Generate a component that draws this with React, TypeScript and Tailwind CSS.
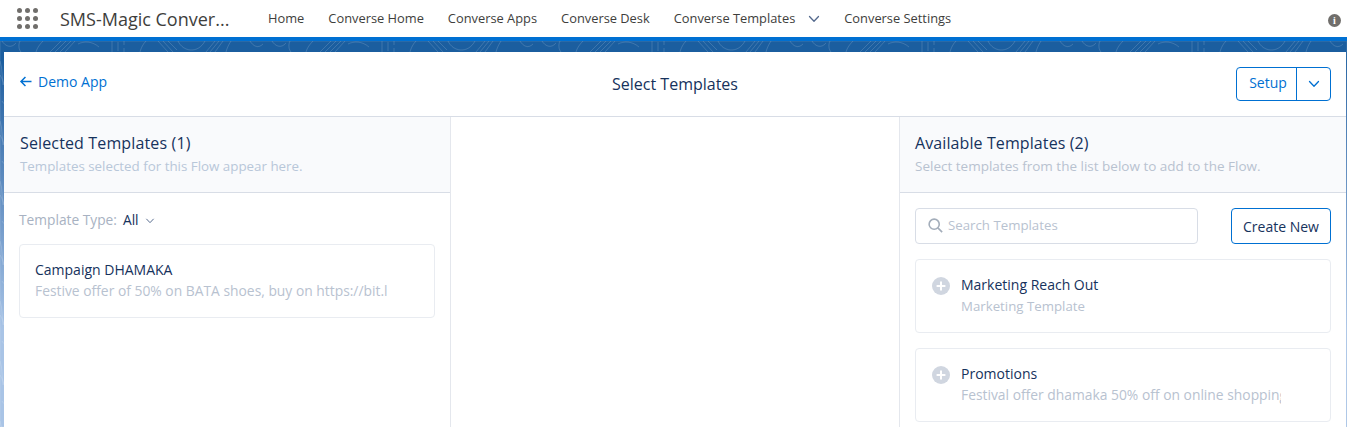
import React from "react";

const Topo = () => (
  <svg className="absolute inset-0 h-full w-full" fill="none" stroke="#ffffff" strokeOpacity="0.15" strokeWidth="1">
    <defs>
      <pattern id="topo" x="0" y="0" width="270" height="60" patternUnits="userSpaceOnUse">
        <path d="M2 0c3 5 9 8 14 2M20 0c-2 4-1 9 1 11M36 11c1-4 4-8 7-11M50 11l11-11M55 11l11-11M60 11l11-11M65 11l10-11M78 3c6-3 14-3 21 3M112 0v11M118 1v9M124 0v4M124 7v4M140 11c1-4 3-8 6-11M158 0l10 11M163 0l10 11M168 0l9 9M178 0c5 11 20 13 27 0M206 11l9-11M210 11l9-11M215 11l8-11M226 11c1-4 3-8 5-11M250 0c3 5 8 8 13 3" />
        <path d="M0 20c3 8 1 16 4 24M0 34c2 3 3 6 3 10" />
      </pattern>
    </defs>
    <rect width="100%" height="100%" fill="url(#topo)" />
  </svg>
);

const Chevron = ({ className = "" }: { className?: string }) => (
  <svg viewBox="0 0 12 8" className={className} fill="none" stroke="currentColor" strokeWidth="1.3" strokeLinecap="round" strokeLinejoin="round">
    <path d="M1.5 1.5 6 6.2l4.5-4.7" />
  </svg>
);

const Plus = () => (
  <svg viewBox="0 0 18 18" className="h-[18px] w-[18px] shrink-0">
    <circle cx="9" cy="9" r="9" fill="#d0d6e0" />
    <path d="M9 4.6v8.8M4.6 9h8.8" stroke="#fff" strokeWidth="2" />
  </svg>
);

const navItems = ["Home", "Converse Home", "Converse Apps", "Converse Desk"];

const AvailableCard = ({ title, sub, subClass }: { title: string; sub: string; subClass: string }) => (
  <div className="flex h-[74px] gap-[11px] rounded border border-[#e9ecf1] bg-white pl-[16px] pt-[15px]">
    <div className="pt-[2px]"><Plus /></div>
    <div className="min-w-0">
      <div className="text-[14px] leading-[20px] text-[#16325c]">{title}</div>
      <div className={`mt-[1px] w-[320px] overflow-hidden whitespace-nowrap leading-[20px] text-[#b8c2d0] ${subClass}`}>{sub}</div>
    </div>
  </div>
);

export default function App() {
  return (
    <div className="relative h-[427px] w-[1347px] overflow-hidden bg-[#2a6bb0] font-['Open_Sans',sans-serif]">
      <nav className="relative z-10 flex h-[37px] items-center bg-white">
        <div className="ml-[17px] grid w-[21px] grid-cols-3 gap-[3px]">
          {Array.from({ length: 9 }).map((_, i) => (
            <span key={i} className="h-[5px] w-[5px] rounded-full bg-[#706e6b]" />
          ))}
        </div>
        <div className="ml-[22px] w-[172px] whitespace-nowrap text-[18px] leading-[24px] text-[#3e3e3c]">SMS-Magic Conver...</div>
        <div className="ml-[36px] flex items-center gap-[24px] pt-[1px] text-[12.85px] text-[#3e3e3c]">
          {navItems.map((t) => (
            <span key={t} className="whitespace-nowrap">{t}</span>
          ))}
          <span className="flex items-center gap-[13px] whitespace-nowrap">
            Converse Templates
            <Chevron className="h-[8px] w-[12px] text-[#54698d]" />
          </span>
          <span className="whitespace-nowrap">Converse Settings</span>
        </div>
        <div className="ml-auto mr-[6px] mt-[4px] flex h-[13px] w-[13px] items-center justify-center rounded-full bg-[#706e6b] font-['Liberation_Serif',serif] text-[10px] font-bold leading-none text-white">i</div>
      </nav>
      <div className="h-[4px] bg-[#0070d2]" />
      <div className="relative h-[386px] bg-gradient-to-b from-[#1b5e9f] from-[5%] to-[#a9c4e6] to-[75%]">
        <Topo />
        <div className="h-[11px]" />
        <main className="relative ml-[4px] mr-[1px] h-[375px] bg-white">
          <header className="flex h-[65px] items-center border-b border-[#d8dde6] pl-[15px] pr-[15px]">
            <div className="flex flex-1 items-center gap-[5px] pb-[5px] text-[14px] text-[#0070d2]">
              <svg viewBox="0 0 14 12" className="h-[11px] w-[14px]" fill="none" stroke="currentColor" strokeWidth="1.6">
                <path d="M13 6H1.8M6.4 1 1.5 6l4.9 5" />
              </svg>
              Demo App
            </div>
            <div className="pb-[1px] text-[16px] text-[#16325c]">Select Templates</div>
            <div className="flex flex-1 justify-end">
              <div className="flex h-[34px] w-[95px] overflow-hidden rounded border border-[#0070d2] bg-white text-[#0070d2]">
                <span className="flex w-[60px] items-center justify-center border-r border-[#0070d2] pb-[3px] pl-[3px] text-[14px]">Setup</span>
                <span className="flex flex-1 items-center justify-center"><Chevron className="h-[8px] w-[12px]" /></span>
              </div>
            </div>
          </header>
          <div className="flex">
            <section className="h-[310px] w-[447px] border-r border-[#e4e7ed]">
              <div className="h-[76px] border-b border-[#d8dde6] bg-[#f9fafc] pl-[16px] pt-[15px]">
                <div className="text-[16px] leading-[22px] tracking-[0.14px] text-[#16325c]">Selected Templates (1)</div>
                <div className="mt-[2px] text-[13.35px] leading-[20px] text-[#b8c7d9]">Templates selected for this Flow appear here.</div>
              </div>
              <div className="flex items-center pl-[15px] pt-[16px] text-[13.75px] leading-[20px]">
                <span className="text-[#a8b2c2]">Template Type:</span>
                <span className="ml-[6px] mt-[1px] text-[#16325c]">All</span>
                <Chevron className="ml-[6px] mt-[2px] h-[6px] w-[10px] text-[#54698d]" />
              </div>
              <div className="ml-[15px] mr-[15px] mt-[14px] h-[74px] rounded border border-[#e9ecf1] pl-[15px] pt-[15px]">
                <div className="text-[14px] leading-[20px] text-[#16325c]">Campaign DHAMAKA</div>
                <div className="mt-[1px] w-[360px] overflow-hidden whitespace-nowrap text-[13.85px] leading-[20px] text-[#b8c2d0]">Festive offer of 50% on BATA shoes, buy on https://bit.l</div>
              </div>
            </section>
            <section className="h-[310px] w-[449px] border-r border-[#e4e7ed]" />
            <section className="h-[310px] flex-1">
              <div className="h-[76px] border-b border-[#d8dde6] bg-[#f9fafc] pl-[15px] pt-[15px]">
                <div className="text-[16px] leading-[22px] tracking-[0.1px] text-[#16325c]">Available Templates (2)</div>
                <div className="mt-[2px] text-[13.5px] leading-[20px] text-[#b8c2d0]">Select templates from the list below to add to the Flow.</div>
              </div>
              <div className="px-[15px] pt-[15px]">
                <div className="flex items-center justify-between">
                  <div className="flex h-[36px] w-[283px] items-center gap-[5px] rounded border border-[#d8dde6] pb-[1px] pl-[12px] text-[13.25px] text-[#b8c2d0]">
                    <svg viewBox="0 0 16 16" className="h-[15px] w-[15px]" fill="none" stroke="#a3adba" strokeWidth="1.7">
                      <circle cx="6.6" cy="6.6" r="5.4" />
                      <path d="m10.5 10.5 4.6 4.6" />
                    </svg>
                    Search Templates
                  </div>
                  <div className="flex h-[36px] w-[100px] items-center justify-center rounded border border-[#0070d2] text-[14px] text-[#16325c]">Create New</div>
                </div>
                <div className="mt-[15px] flex flex-col gap-[15px]">
                  <AvailableCard title="Marketing Reach Out" sub="Marketing Template" subClass="text-[13.25px]" />
                  <AvailableCard title="Promotions" sub="Festival offer dhamaka 50% off on online shopping" subClass="text-[13.85px]" />
                </div>
              </div>
            </section>
          </div>
        </main>
      </div>
    </div>
  );
}
